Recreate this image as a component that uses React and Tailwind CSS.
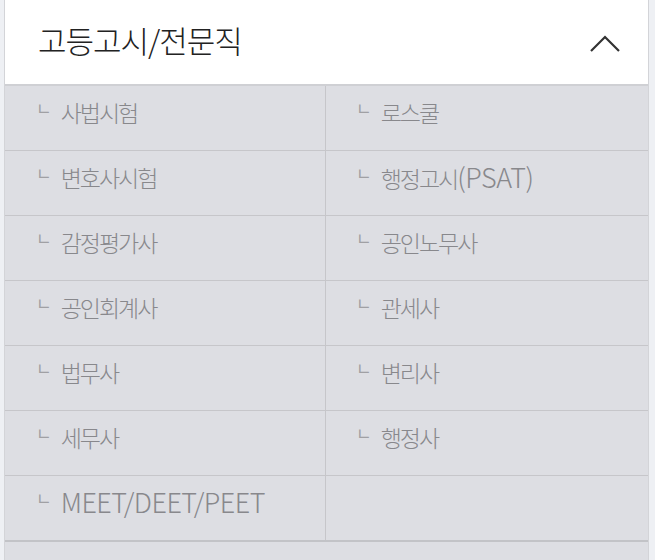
const items = [
  ['사법시험', '로스쿨'],
  ['변호사시험', '행정고시(PSAT)'],
  ['감정평가사', '공인노무사'],
  ['공인회계사', '관세사'],
  ['법무사', '변리사'],
  ['세무사', '행정사'],
  ['MEET/DEET/PEET', ''],
]

const font = { fontFamily: '"Noto Sans CJK KR", "Noto Sans", sans-serif' }

// latin runs render larger in the original font
const Label = ({ text }) =>
  text.split(/([A-Za-z()/]+)/).filter(Boolean).map((part, i) =>
    /[A-Za-z()/]/.test(part) ? (
      <span key={i} className="text-[27px] tracking-[-0.5px]">{part}</span>
    ) : (
      <span key={i}>{part}</span>
    )
  )

const Cell = ({ label, right }) => (
  <div
    className={`flex h-[64px] items-center pb-[12px] ${right ? 'pl-[30px]' : 'pl-[31px] border-r border-[#c6c6ca]'}`}
  >
    {label && (
      <>
        <span className="mr-[9px] -mt-[9px] text-[17px] leading-none text-[#a0a0a4]">ㄴ</span>
        <span className="text-[23px] leading-[30px] font-light tracking-[-2px] text-[#88888c]">
          <Label text={label} />
        </span>
      </>
    )}
  </div>
)

export default function App() {
  return (
    <div className="h-[560px] w-[655px] overflow-hidden bg-[#eef0f4] pl-[4px] pr-[6px]" style={font}>
      <div className="h-full border-x border-[#d3d4d8] bg-[#dddee3]">
        <div className="flex h-[86px] items-center justify-between border-b-2 border-[#cfd0d4] bg-white pb-[4px] pl-[33px] pr-[27px]">
          <span className="text-[31px] font-light tracking-[-1px] text-[#222]">고등고시/전문직</span>
          <svg width="32" height="18" viewBox="0 0 32 18" className="mt-[8px]">
            <polyline points="2,16 16,2 30,16" fill="none" stroke="#333" strokeWidth="2.2" />
          </svg>
        </div>
        {items.map(([a, b], i) => (
          <div
            key={i}
            className={`grid grid-cols-[321px_1fr] ${i === items.length - 1 ? 'border-b-2 border-[#c2c3c7]' : 'border-b border-[#c6c6ca]'}`}
          >
            <Cell label={a} />
            <Cell label={b} right />
          </div>
        ))}
      </div>
    </div>
  )
}
